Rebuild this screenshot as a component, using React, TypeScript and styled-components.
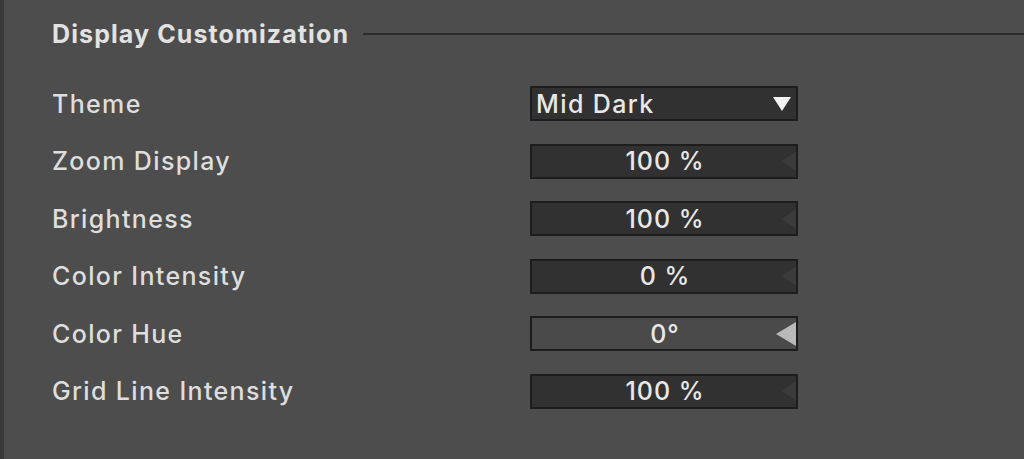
import React from "react";
import styled, { createGlobalStyle } from "styled-components";

const Global = createGlobalStyle`
  html, body { margin: 0; padding: 0; background: #4d4d4d; }
  body { font-family: Inter, "Noto Sans", sans-serif; overflow: hidden; }
`;

const Page = styled.div`
  display: flex;
  width: 1024px;
  height: 459px;
  background: #4d4d4d;
`;

const Strip = styled.div`
  width: 4px;
  flex: none;
  background: #3a3a3a;
`;

const Section = styled.div`
  flex: 1;
  padding: 18px 0 0 48px;
  display: flex;
  flex-direction: column;
`;

const Header = styled.div`
  display: flex;
  align-items: center;
  gap: 14px;
  height: 32px;
`;

const Title = styled.h2`
  margin: 0;
  font-size: 25px;
  font-weight: 700;
  color: #e2e2e2;
  letter-spacing: 1.1px;
  white-space: nowrap;
`;

const Rule = styled.div`
  flex: 1;
  height: 2px;
  background: #2b2b2b;
`;

const Rows = styled.div`
  display: flex;
  flex-direction: column;
  gap: 22.6px;
  margin-top: 36px;
`;

const Row = styled.div`
  display: grid;
  grid-template-columns: 478px 268px;
  align-items: center;
  height: 35px;
`;

const Label = styled.div`
  font-size: 25px;
  font-weight: 550;
  color: #dedede;
  letter-spacing: 1.35px;
  white-space: nowrap;
`;

const Box = styled.div<{ $light?: boolean }>`
  position: relative;
  box-sizing: border-box;
  height: 35px;
  border: 2px solid #1d1d1d;
  background: ${(p) => (p.$light ? "#4a4a4a" : "#313131")};
  display: flex;
  align-items: center;
  color: #e8e8e8;
  font-size: 25px;
  font-weight: 500;
  letter-spacing: 1px;
`;

const DropText = styled.span`
  padding-left: 4px;
  flex: 1;
  letter-spacing: 1.4px;
`;

const DownArrow = styled.span`
  width: 0;
  height: 0;
  margin-right: 5px;
  border-left: 9px solid transparent;
  border-right: 9px solid transparent;
  border-top: 14px solid #f2f2f2;
`;

const Value = styled.span`
  flex: 1;
  text-align: center;
  padding-left: 2px;
`;

const LeftArrow = styled.span<{ $bright?: boolean }>`
  position: absolute;
  right: 0;
  top: 50%;
  transform: translateY(-50%);
  width: 0;
  height: 0;
  border-top: ${(p) => (p.$bright ? 12 : 10)}px solid transparent;
  border-bottom: ${(p) => (p.$bright ? 12 : 10)}px solid transparent;
  border-right: ${(p) => (p.$bright ? 20 : 14)}px solid
    ${(p) => (p.$bright ? "#b9b9b9" : "#3b3b3b")};
`;

type Slider = { label: string; value: string; bright?: boolean };

const sliders: Slider[] = [
  { label: "Zoom Display", value: "100 %" },
  { label: "Brightness", value: "100 %" },
  { label: "Color Intensity", value: "0 %" },
  { label: "Color Hue", value: "0°", bright: true },
  { label: "Grid Line Intensity", value: "100 %" },
];

export default function App() {
  return (
    <>
      <Global />
      <Page>
        <Strip />
        <Section>
          <Header>
            <Title>Display Customization</Title>
            <Rule />
          </Header>
          <Rows>
            <Row>
              <Label>Theme</Label>
              <Box>
                <DropText>Mid Dark</DropText>
                <DownArrow />
              </Box>
            </Row>
            {sliders.map((s) => (
              <Row key={s.label}>
                <Label>{s.label}</Label>
                <Box $light={s.bright}>
                  <Value>{s.value}</Value>
                  <LeftArrow $bright={s.bright} />
                </Box>
              </Row>
            ))}
          </Rows>
        </Section>
      </Page>
    </>
  );
}
